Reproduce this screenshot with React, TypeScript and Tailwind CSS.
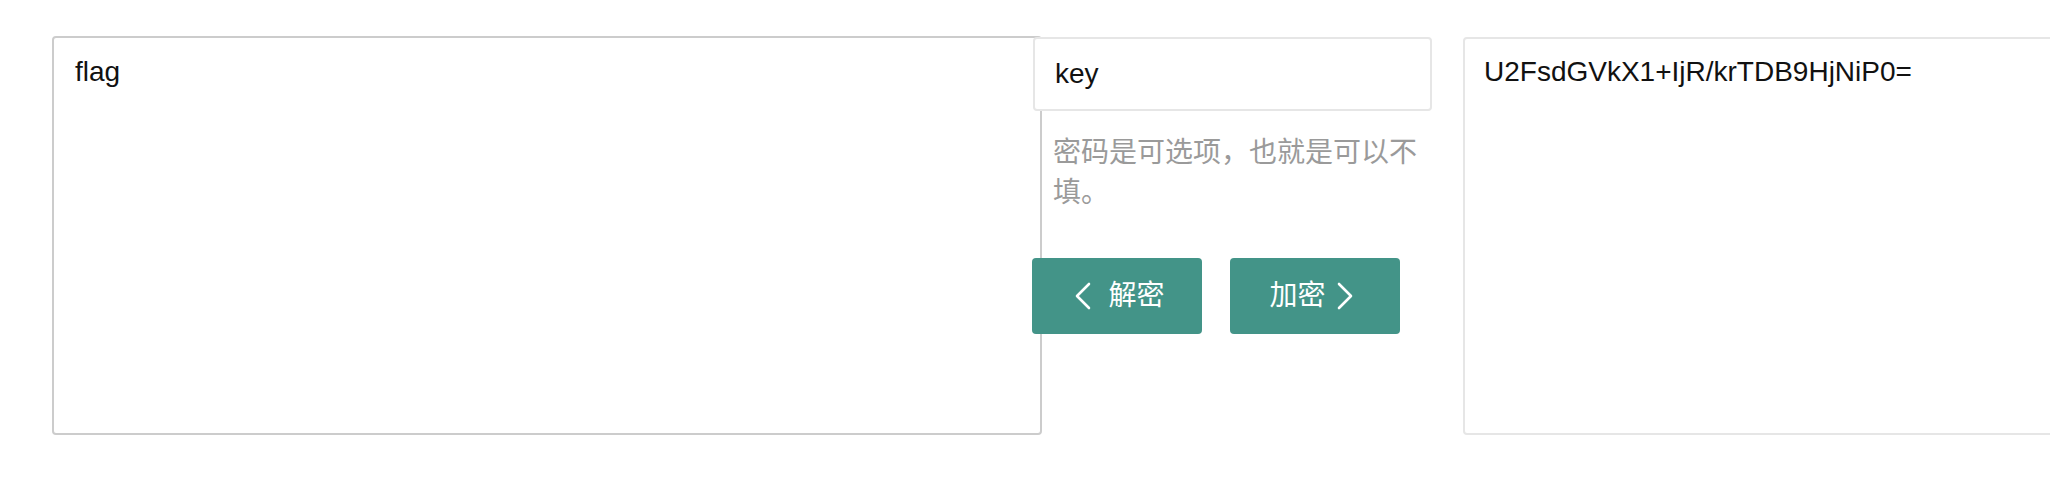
import { useState } from 'react';

const font = { fontFamily: '"Liberation Sans", "Noto Sans CJK SC", sans-serif' };

function Chevron({ dir }: { dir: 'left' | 'right' }) {
  return (
    <svg width="16" height="28" viewBox="0 0 16 28" fill="none">
      <polyline
        points={dir === 'left' ? '14,2 2,14 14,26' : '2,2 14,14 2,26'}
        stroke="white"
        strokeWidth="2.6"
        strokeLinecap="round"
        strokeLinejoin="round"
      />
    </svg>
  );
}

export default function App() {
  const [plain, setPlain] = useState('flag');
  const [key, setKey] = useState('key');
  const [cipher, setCipher] = useState('U2FsdGVkX1+IjR/krTDB9HjNiP0=');

  return (
    <div className="w-[2050px] h-[488px] overflow-hidden bg-white" style={font}>
      <div className="flex items-start pt-[36px] pl-[52px]">
        {/* plain text */}
        <textarea
          value={plain}
          onChange={(e) => setPlain(e.target.value)}
          className="w-[990px] h-[399px] shrink-0 resize-none rounded-[4px] border-2 border-[#cccccc] pt-[14px] px-[21px] text-[28px] leading-[40px] text-[#111] outline-none"
          style={font}
        />

        {/* middle column */}
        <div className="ml-[-9px] w-[399px] shrink-0 relative">
          <input
            value={key}
            onChange={(e) => setKey(e.target.value)}
            className="mt-[1px] block w-full h-[74px] rounded-[4px] border-2 border-[#e6e6e6] bg-white px-[20px] text-[28px] text-[#111] outline-none"
            style={font}
          />
          <p className="mt-[22px] pl-[20px] text-[28px] leading-[40px] text-[#9a9a9a]">
            密码是可选项，也就是可以不填。
          </p>
          <div className="mt-[45px] -ml-px flex gap-[28px]">
            <button className="flex h-[76px] w-[170px] items-center justify-center gap-[17px] rounded-[4px] bg-[#439488] pl-[6px] text-[28px] text-white">
              <Chevron dir="left" />
              <span>解密</span>
            </button>
            <button className="flex h-[76px] w-[170px] items-center justify-center gap-[11px] rounded-[4px] bg-[#439488] pr-[8px] text-[28px] text-white">
              <span>加密</span>
              <Chevron dir="right" />
            </button>
          </div>
        </div>

        {/* cipher text */}
        <textarea
          value={cipher}
          onChange={(e) => setCipher(e.target.value)}
          className="ml-[31px] mt-px w-[640px] h-[398px] shrink-0 resize-none rounded-[4px] border-2 border-[#e6e6e6] pt-[13px] px-[19px] text-[28px] leading-[40px] text-[#111] outline-none"
          style={font}
        />
      </div>
    </div>
  );
}
